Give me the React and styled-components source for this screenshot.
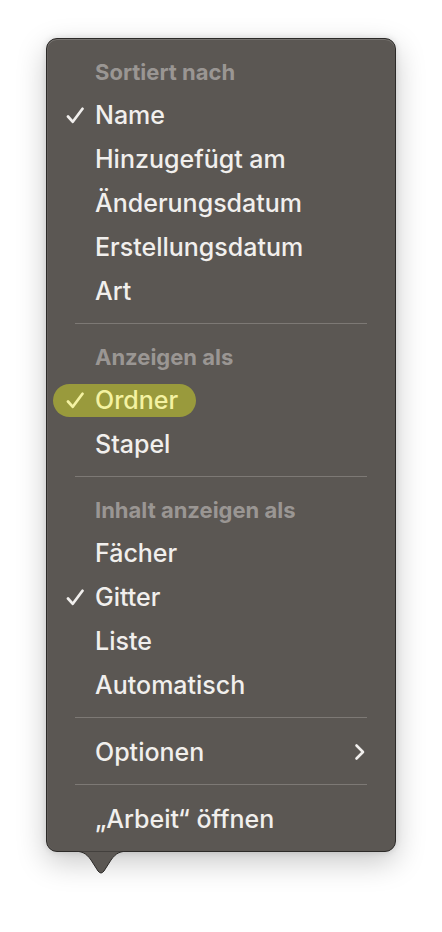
import React from "react";
import styled, { createGlobalStyle } from "styled-components";

const GlobalStyle = createGlobalStyle`
  html, body {
    margin: 0;
    padding: 0;
    background: #ffffff;
  }
  body {
    font-family: Inter, "Noto Sans", "Liberation Sans", sans-serif;
  }
`;

const Page = styled.div`
  width: 442px;
  height: 932px;
  padding: 38px 0 0 46px;
  box-sizing: border-box;
`;

const Menu = styled.div`
  position: relative;
  width: 350px;
  box-sizing: border-box;
  padding: 12px 0 10px;
  background: #5b5753;
  border: 1px solid #2c2a28;
  border-radius: 11px;
  box-shadow: inset 0 1px 0 rgba(255, 255, 255, 0.18),
    inset 1px 0 0 rgba(255, 255, 255, 0.06), 0 10px 30px rgba(0, 0, 0, 0.22),
    0 0 6px rgba(0, 0, 0, 0.12);
`;

const Tail = styled.svg`
  position: absolute;
  left: 25px;
  bottom: -25px;
  width: 58px;
  height: 26px;
  overflow: visible;
`;

const Header = styled.div`
  height: 42px;
  display: flex;
  align-items: center;
  padding-left: 48px;
  font-size: 22px;
  font-weight: 700;
  color: #9a9693;
`;

const Item = styled.div`
  height: 44px;
  display: flex;
  align-items: center;
  padding: 0 30px 0 19px;
  font-size: 25px;
  font-weight: 500;
  color: #f1efed;
`;

const Label = styled.span`
  display: inline-flex;
  align-items: center;
  height: 33px;
  margin-left: ${(p) => (p.$marked ? "-13px" : "0")};
  padding: 0 ${(p) => (p.$marked ? "18px 0 13px" : "0")};
  border-radius: 17px;
  background: ${(p) => (p.$marked ? "#999a3c" : "transparent")};
  color: ${(p) => (p.$marked ? "#f4f2a2" : "inherit")};
`;

const Check = styled.span`
  width: 29px;
  display: inline-flex;
  align-items: center;
`;

const Text = styled.span`
  flex: 1;
`;

const Chevron = styled.svg`
  width: 12px;
  height: 18px;
  margin-left: auto;
  margin-right: -1px;
`;

const Separator = styled.div`
  height: 23px;
  padding-top: 10px;
  box-sizing: border-box;
  &::after {
    content: "";
    display: block;
    margin: 0 28px;
    height: 1px;
    background: #7d7975;
  }
`;

const CheckIcon = ({ color }) => (
  <svg width="19" height="17" viewBox="0 0 19 17">
    <path
      d="M2 9.5 L6.8 14.8 L16.5 1.8"
      fill="none"
      stroke={color}
      strokeWidth="2.7"
      strokeLinecap="round"
      strokeLinejoin="round"
    />
  </svg>
);

const MenuItem = ({ checked, marked, children, submenu }) => (
  <Item>
    <Label $marked={marked}>
      <Check>{checked && <CheckIcon color={marked ? "#f4f2a2" : "#f1efed"} />}</Check>
      <Text>{children}</Text>
    </Label>
    {submenu && (
      <Chevron viewBox="0 0 12 18">
        <path
          d="M2.5 2.5 L9 9 L2.5 15.5"
          fill="none"
          stroke="#f1efed"
          strokeWidth="2.6"
          strokeLinecap="round"
          strokeLinejoin="round"
        />
      </Chevron>
    )}
  </Item>
);

export default function App() {
  return (
    <>
      <GlobalStyle />
      <Page>
        <Menu>
          <Header>Sortiert nach</Header>
          <MenuItem checked>Name</MenuItem>
          <MenuItem>Hinzugefügt am</MenuItem>
          <MenuItem>Änderungsdatum</MenuItem>
          <MenuItem>Erstellungsdatum</MenuItem>
          <MenuItem>Art</MenuItem>
          <Separator />
          <Header>Anzeigen als</Header>
          <MenuItem checked marked>
            Ordner
          </MenuItem>
          <MenuItem>Stapel</MenuItem>
          <Separator />
          <Header>Inhalt anzeigen als</Header>
          <MenuItem>Fächer</MenuItem>
          <MenuItem checked>Gitter</MenuItem>
          <MenuItem>Liste</MenuItem>
          <MenuItem>Automatisch</MenuItem>
          <Separator />
          <MenuItem submenu>Optionen</MenuItem>
          <Separator />
          <MenuItem>„Arbeit“ öffnen</MenuItem>
          <Tail viewBox="0 0 58 26">
            <path
              d="M0 1 C10 1 14 3 19 10 L26 21 Q29 25 32 21 L39 10 C44 3 48 1 58 1 Z"
              fill="#5b5753"
              stroke="#2c2a28"
              strokeWidth="1"
            />
            <rect x="0" y="-2" width="58" height="3" fill="#5b5753" />
          </Tail>
        </Menu>
      </Page>
    </>
  );
}
